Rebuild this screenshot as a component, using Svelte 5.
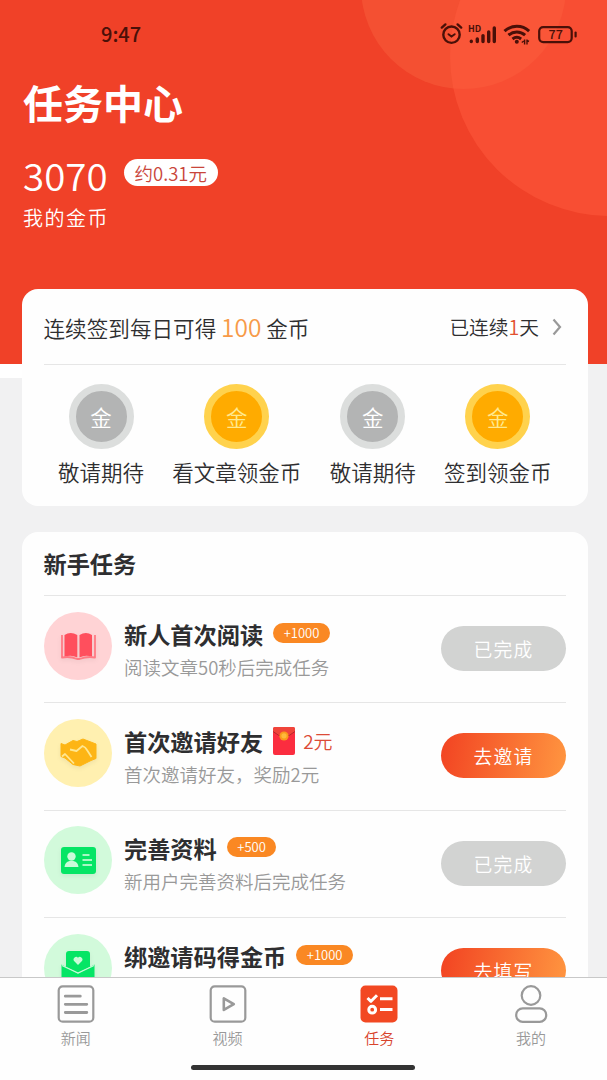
<script lang="ts">
  interface Task {
    icon: string;
    title: string;
    desc: string;
    coins?: string;
    cash?: string;
    action: string;
    done: boolean;
  }

  const signIns = [
    { label: "敬请期待", active: false },
    { label: "看文章领金币", active: true },
    { label: "敬请期待", active: false },
    { label: "签到领金币", active: true },
  ];

  const tasks: Task[] = [
    {
      icon: "book",
      title: "新人首次阅读",
      desc: "阅读文章50秒后完成任务",
      coins: "+1000",
      action: "已完成",
      done: true,
    },
    {
      icon: "hands",
      title: "首次邀请好友",
      desc: "首次邀请好友，奖励2元",
      cash: "2元",
      action: "去邀请",
      done: false,
    },
    {
      icon: "profile",
      title: "完善资料",
      desc: "新用户完善资料后完成任务",
      coins: "+500",
      action: "已完成",
      done: true,
    },
    {
      icon: "mail",
      title: "绑邀请码得金币",
      desc: "填写邀请码领取金币",
      coins: "+1000",
      action: "去填写",
      done: false,
    },
  ];

  const tabs = [
    { icon: "news", label: "新闻" },
    { icon: "video", label: "视频" },
    { icon: "task", label: "任务" },
    { icon: "mine", label: "我的" },
  ];

  let current = $state("task");
</script>

<div class="page">
  <header class="hero">
    <div class="bubble bubble-small"></div>
    <div class="bubble bubble-large"></div>

    <div class="status">
      <span class="time">9:47</span>
      <svg class="status-icons" width="138" height="26" viewBox="0 0 138 26">
        <g fill="none" stroke="#4a1008" stroke-width="2.4" stroke-linecap="round">
          <circle cx="11.5" cy="13.7" r="8.2" />
          <path d="M8.5 13.2l3 2.4 3.200-2.400" stroke-width="2" />
          <path d="M1.800 6.600l3.600-3.200M21.200 6.600l-3.600-3.200" />
        </g>
        <text x="28" y="11.300" class="hd">HD</text>
        <g stroke="#4a1008" stroke-width="3.400" stroke-linecap="round">
          <path d="M31.300 20.200v.4M37.300 18v2.600M43 14.600v6M48.700 11v9.600M54.300 7v13.600" />
        </g>
        <g fill="none" stroke="#4a1008" stroke-width="3">
          <path d="M64.500 10.200a18 18 0 0 1 24.600 0" />
          <path d="M68.500 14.200a12.500 12.500 0 0 1 16.600 0" />
          <path d="M72.500 18a7 7 0 0 1 8.600 0" />
        </g>
        <circle cx="76.800" cy="20.700" r="2" fill="#4a1008" />
        <path d="M81.800 21.500l2-1.500M84.600 18.500v5M87 18.500v5M87 19.500l2 1" stroke="#4a1008" stroke-width="1.400" />
        <rect x="99.200" y="6.100" width="32.500" height="15" rx="4" fill="none" stroke="#4a1008" stroke-width="2.200" />
        <path d="M135.600 11.500v4" stroke="#4a1008" stroke-width="2.200" stroke-linecap="round" />
        <text x="108.500" y="18.400" class="battery">77</text>
      </svg>
    </div>

    <h1>任务中心</h1>
    <div class="balance">
      <span class="amount">3070</span>
      <span class="worth">约0.31元</span>
    </div>
    <p class="balance-label">我的金币</p>
  </header>

  <main>
    <section class="card sign">
      <div class="sign-head">
        <p class="sign-title">连续签到每日可得 <em>100</em> 金币</p>
        <p class="streak">已连续<b>1</b>天</p>
        <svg width="10" height="18" viewBox="0 0 10 18">
          <path d="M1.5 1.5L8 9l-6.500 7.500" fill="none" stroke="#999" stroke-width="2.2" />
        </svg>
      </div>
      <div class="coins">
        {#each signIns as item}
          <div class="coin-item">
            <span class="coin" class:active={item.active}>金</span>
            <span>{item.label}</span>
          </div>
        {/each}
      </div>
    </section>

    <section class="card">
      <h2>新手任务</h2>
      {#each tasks as task}
        <div class="task">
          <div class="task-icon {task.icon}">
            <svg width="68" height="68" viewBox="0 0 68 68">
              {#if task.icon === "book"}
                <path d="M20.500 23q6-4 12.800 0v22.500q-6.500-3-12.800-.5zM35.500 23q6.500-4 12.500 0v22q-6-2.500-12.500.5z" fill="#ff4f5d" />
                <path d="M18 23v22.500q8-1.500 15 1.500h2.500q8-3 15.500-1.500V23" fill="none" stroke="#ff7a84" stroke-width="1.800" stroke-linejoin="round" />
              {:else if task.icon === "hands"}
                <path d="M17 24.500l4 1.500 8-4.500 4 1 6-2.500 13 5v14.500l-5 2L36 47l-7-1.500-8-6.500-4-1.500z" fill="#fdb515" stroke="#fdb515" stroke-linejoin="round" />
                <path d="M26 30.500l6.500 1.500 6-5q3 1 4.500 4l4.500 7M18 37.500l3-2.500 9 9.500" fill="none" stroke="#ffe791" stroke-width="1.800" stroke-linejoin="round" />
              {:else if task.icon === "profile"}
                <rect x="17" y="21" width="35" height="27" rx="3" fill="#05e565" />
                <g fill="#c9fbd9">
                  <circle cx="27.500" cy="30.500" r="4.200" />
                  <path d="M20.500 41q.5-5 5-6h4q4.500 1 5 6z" />
                </g>
                <path d="M38.500 29h7M38.500 34h9.500M38.500 39h9.500" stroke="#a5f8c3" stroke-width="1.800" />
              {:else}
                <path d="M22 33V20q0-3 3-3h18q3 0 3 3v13l-12 6z" fill="#05e565" />
                <path d="M17.500 30.500L34 39.500l16.500-9V56h-33z" fill="#05e565" />
                <path d="M18 31.500l16 7.500 16-7.500" fill="none" stroke="#c9fbd9" stroke-width="1.300" />
                <path d="M34 31l-4.200-4.200a2.600 2.600 0 0 1 4.200-3 2.600 2.600 0 0 1 4.200 3z" fill="#c9fbd9" />
              {/if}
            </svg>
          </div>
          <div class="task-body">
            <div class="task-title">
              <h3>{task.title}</h3>
              {#if task.coins}
                <span class="tag">{task.coins}</span>
              {/if}
              {#if task.cash}
                <svg class="packet" width="22" height="28" viewBox="0 0 22 28">
                  <rect width="22" height="28" rx="2" fill="#fb2d3f" />
                  <path d="M0 2q0-2 2-2h18q2 0 2 2v3q-11 10-22 0z" fill="#f0443a" />
                  <path d="M0 4.500q11 10 22 0" fill="none" stroke="#b9232b" />
                  <circle cx="11" cy="9" r="4.600" fill="#fb9a1c" />
                  <circle cx="11" cy="8.800" r="2.600" fill="#ffb93b" />
                </svg>
                <span class="cash">{task.cash}</span>
              {/if}
            </div>
            <p>{task.desc}</p>
          </div>
          <button class:done={task.done}>{task.action}</button>
        </div>
      {/each}
    </section>
  </main>

  <nav>
    {#each tabs as tab}
      <button class:current={current === tab.icon} onclick={() => (current = tab.icon)}>
        <svg width="38" height="38" viewBox="0 0 38 38" fill="none" stroke="#999" stroke-width="2.200" stroke-linecap="round" stroke-linejoin="round">
          {#if tab.icon === "news"}
            <rect x="1.700" y="1.300" width="34.600" height="35.400" rx="4" />
            <path d="M8.300 11.200h15M8.300 19.300h21.500M8.300 27.500h21.500" stroke-width="2.800" />
          {:else if tab.icon === "video"}
            <rect x="1.700" y="1.300" width="34.600" height="35.400" rx="4" />
            <path d="M14.800 13.300v11.600l10-5.800z" stroke-width="2.600" />
          {:else if tab.icon === "task"}
            <rect x=".5" y=".5" width="37" height="37" rx="5" fill="#f24822" stroke="none" />
            <g stroke="#fff" stroke-width="3" stroke-linecap="butt">
              <path d="M7.500 13l3.500 3.300 6-6M20 13.700h12.500M20 24.500h12.500" />
              <circle cx="12.200" cy="24.700" r="3.400" />
            </g>
          {:else}
            <circle cx="19" cy="10.500" r="9.300" />
            <rect x="4.200" y="23.300" width="30" height="13.500" rx="6.500" />
          {/if}
        </svg>
        <span>{tab.label}</span>
      </button>
    {/each}
    <div class="home-bar"></div>
  </nav>
</div>

<style>
  :global(body) {
    margin: 0;
  }

  .page {
    position: relative;
    height: 1080px;
    overflow: hidden;
    background: linear-gradient(#fff, #fff) 0 364px / 23px 14px no-repeat #f1f1f2;
    color: #2e2e30;
    font-family: "Noto Sans CJK SC", sans-serif;
    font-weight: 350;
  }

  h1,
  h2,
  h3,
  p {
    margin: 0;
  }

  button {
    border: 0;
    padding: 0;
    font-family: inherit;
    font-weight: inherit;
  }

  /* Header */
  .hero {
    position: relative;
    box-sizing: border-box;
    height: 364px;
    padding: 21px 24px 0 23px;
    overflow: hidden;
    background: #f04128;
    color: #fff;
  }

  .bubble {
    position: absolute;
    border-radius: 50%;
  }

  .bubble-small {
    left: 361px;
    top: -116px;
    width: 205px;
    height: 205px;
    background: rgba(255, 125, 80, 0.26);
  }

  .bubble-large {
    left: 450px;
    top: -104px;
    width: 320px;
    height: 320px;
    background: rgba(255, 92, 62, 0.5);
  }

  .status {
    position: relative;
    display: flex;
    justify-content: space-between;
    height: 26px;
    padding: 0 5px 0 78px;
  }

  .time {
    color: #4a1008;
    font-size: 20px;
    font-weight: 500;
    line-height: 26px;
  }

  .hd {
    fill: #4a1008;
    font-size: 9px;
    font-weight: 700;
  }

  .battery {
    fill: #4a1008;
    font-size: 12.500px;
    font-weight: 500;
  }

  h1 {
    margin-top: 25px;
    font-size: 40px;
    font-weight: 700;
    line-height: 60px;
  }

  .balance {
    display: flex;
    gap: 16px;
    height: 46px;
    margin-top: 20px;
  }

  .amount {
    font-size: 38.500px;
    line-height: 44px;
  }

  .worth {
    height: 27px;
    margin-top: 7px;
    padding: 0 11px;
    border-radius: 14px;
    background: #fff;
    color: #c9453a;
    font-size: 18.500px;
    line-height: 28px;
  }

  .balance-label {
    margin-top: 5px;
    font-size: 20px;
    letter-spacing: 1.500px;
    line-height: 30px;
  }

  /* Cards */
  main {
    position: relative;
    display: flex;
    flex-direction: column;
    gap: 26px;
    margin: -75px 19.500px 0 22px;
  }

  .card {
    padding: 0 21.500px;
    border-radius: 16px;
    background: #fefefe;
  }

  .sign {
    height: 217px;
    box-sizing: border-box;
  }

  .sign-head {
    display: flex;
    align-items: center;
    height: 75px;
    padding-right: 4px;
    border-bottom: 1px solid #e6e6e6;
  }

  .sign-title {
    flex: 1;
    padding-top: 2px;
    font-size: 21.600px;
    line-height: 32px;
  }

  .sign-title em {
    color: #f79a48;
    font-size: 24.500px;
    font-style: normal;
  }

  .streak {
    margin-right: 13px;
    font-size: 19.700px;
  }

  .streak b {
    color: #e2502f;
    font-weight: inherit;
  }

  .sign-head svg {
    margin-top: 1px;
  }

  .coins {
    display: flex;
    justify-content: space-between;
    padding: 19px 14.500px 0;
    font-size: 21.500px;
    line-height: 32px;
  }

  .coin-item {
    display: flex;
    flex-direction: column;
    align-items: center;
    gap: 7px;
  }

  .coin {
    box-sizing: border-box;
    width: 65px;
    height: 65px;
    border: 7px solid #dcdedd;
    border-radius: 50%;
    background: #b3b4b4;
    color: #fff;
    line-height: 51px;
    text-align: center;
  }

  .coin.active {
    border-color: #ffd24d;
    background: #ffab00;
    color: #ffe98f;
  }

  /* Tasks */
  h2 {
    height: 63px;
    font-size: 23.200px;
    font-weight: 700;
    line-height: 62px;
  }

  .task {
    display: flex;
    align-items: center;
    height: 106.300px;
    border-top: 1px solid #e6e6e6;
  }

  .task-icon {
    width: 68px;
    height: 68px;
    margin: 0 12.500px 7px 0;
    border-radius: 50%;
  }

  .task-icon svg {
    display: block;
    filter: drop-shadow(0 2px 2px rgba(0, 0, 0, 0.06));
  }

  .book {
    background: #ffd3d5;
  }

  .hands {
    background: #fff0b0;
  }

  .profile,
  .mail {
    background: #d2fadb;
  }

  .task-body {
    flex: 1;
    padding-top: 2px;
  }

  .task-title {
    display: flex;
    align-items: center;
    height: 34px;
  }

  h3 {
    font-size: 23.200px;
    font-weight: 700;
    line-height: 34px;
  }

  .tag {
    height: 20px;
    margin: -2px 0 0 10px;
    padding: 0 10.500px;
    border-radius: 10px;
    background: #fa8823;
    color: #fff;
    font-size: 13px;
    line-height: 20px;
  }

  .packet {
    margin: 0 8px 0 10px;
  }

  .cash {
    color: #dc4b37;
    font-size: 19px;
  }

  .task-body p {
    color: #999;
    font-size: 18.500px;
    line-height: 33px;
  }

  .task button {
    width: 125px;
    height: 45px;
    border-radius: 23px;
    margin-top: -1px;
    background: linear-gradient(100deg, #f24322, #ff9640);
    color: #fff;
    font-size: 18.800px;
    letter-spacing: 1.300px;
  }

  .task button.done {
    background: #d2d3d2;
  }

  /* Tab bar */
  nav {
    position: absolute;
    right: 0;
    bottom: 0;
    left: 0;
    display: flex;
    height: 102px;
    border-top: 1px solid #c8c8c8;
    background: #fefefe;
  }

  nav button {
    display: flex;
    flex: 1;
    flex-direction: column;
    align-items: center;
    padding-top: 7px;
    background: none;
    color: #999;
    font-size: 15px;
    line-height: 30px;
  }

  nav button.current {
    color: #d8432c;
  }

  .home-bar {
    position: absolute;
    bottom: 10px;
    left: 191px;
    width: 224px;
    height: 5px;
    border-radius: 3px;
    background: #333;
  }
</style>
